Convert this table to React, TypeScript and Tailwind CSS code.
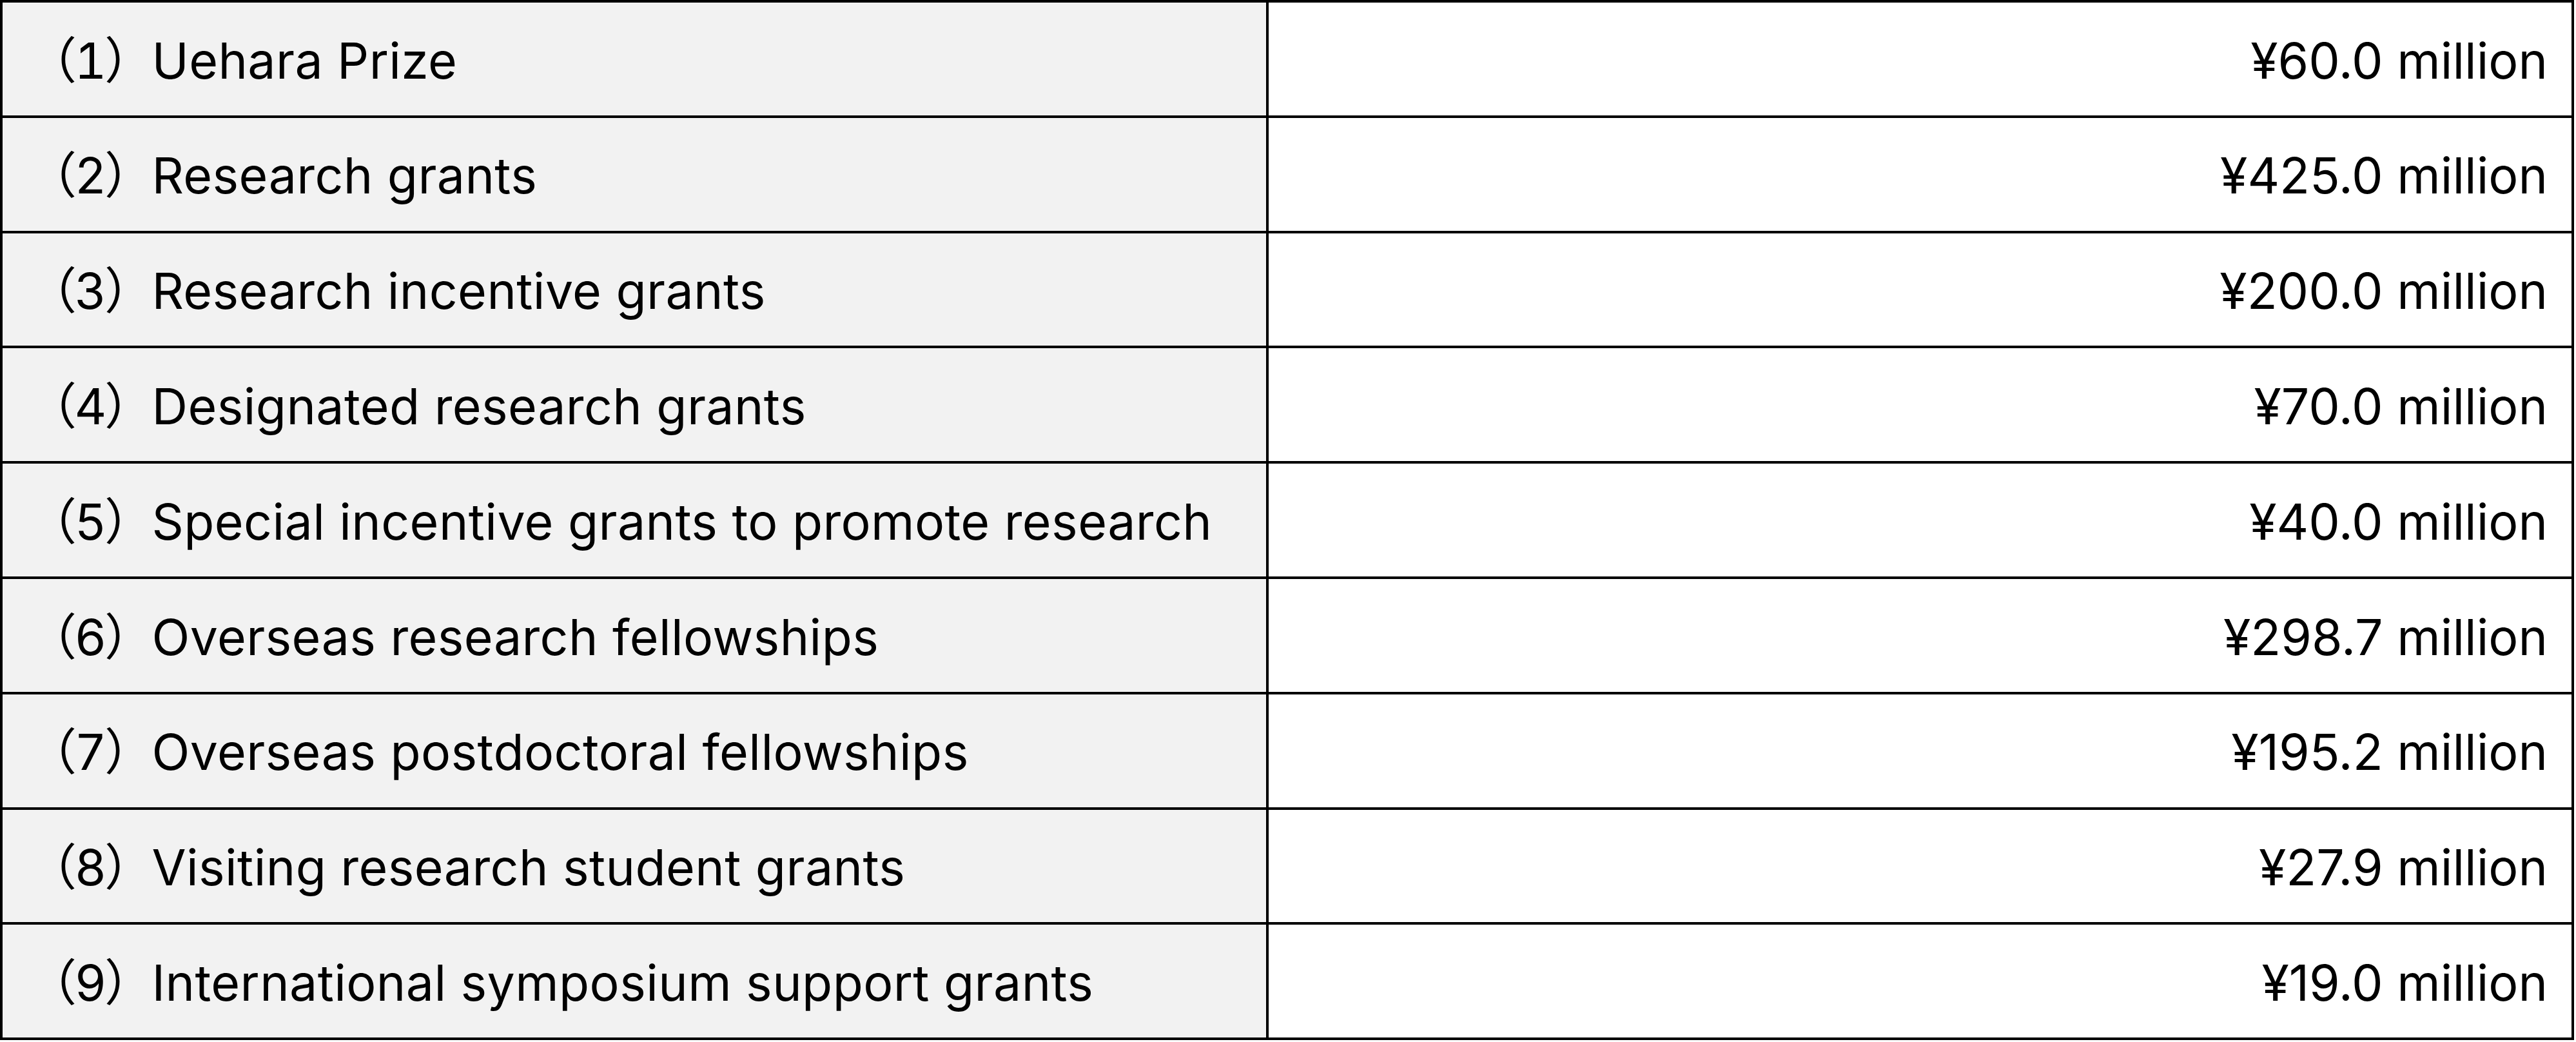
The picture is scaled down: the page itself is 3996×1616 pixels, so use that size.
const rows = [
  { label: 'Uehara Prize', amount: '¥60.0 million' },
  { label: 'Research grants', amount: '¥425.0 million' },
  { label: 'Research incentive grants', amount: '¥200.0 million' },
  { label: 'Designated research grants', amount: '¥70.0 million' },
  { label: 'Special incentive grants to promote research', amount: '¥40.0 million' },
  { label: 'Overseas research fellowships', amount: '¥298.7 million' },
  { label: 'Overseas postdoctoral fellowships', amount: '¥195.2 million' },
  { label: 'Visiting research student grants', amount: '¥27.9 million' },
  { label: 'International symposium support grants', amount: '¥19.0 million' },
];

export default function App() {
  return (
    <div className="w-[3996px] h-[1616px] bg-white">
      <div className="w-[3993px] border-l-4 border-t-4 border-black font-['Inter','Noto_Sans_CJK_JP',sans-serif] text-[77px] text-black">
        {rows.map((r, i) => (
          <div key={i} className="grid grid-cols-[1964px_1fr] h-[178.8px]">
            {/* item name */}
            <div className="flex items-center whitespace-nowrap bg-[#f2f2f2] border-r-4 border-b-4 border-black pl-[38px] pt-[6px]">
              <span className="tabular-nums tracking-[-3.5px]">（{i + 1}）</span>
              <span className="tracking-[0.4px]">{r.label}</span>
            </div>
            {/* amount */}
            <div className="flex items-center justify-end whitespace-nowrap border-r-4 border-b-4 border-black pr-[37px] pt-[6px]">
              {r.amount}
            </div>
          </div>
        ))}
      </div>
    </div>
  );
}
